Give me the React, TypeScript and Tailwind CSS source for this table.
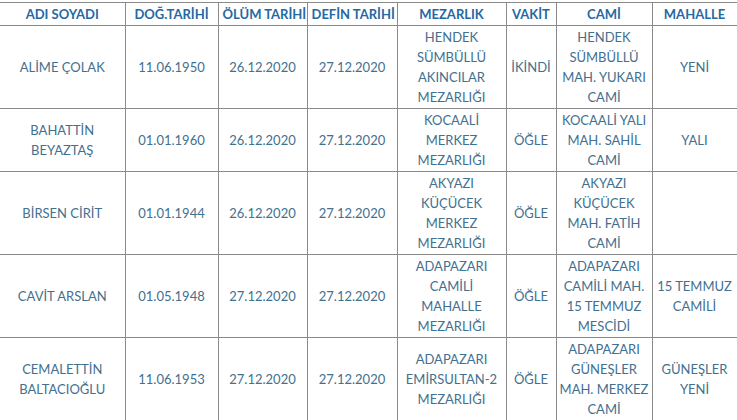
import React from "react";

type Row = {
  name: string;
  dob: string;
  death: string;
  burial: string;
  cemetery: string;
  time: string;
  mosque: string;
  district: string;
};

const rows: Row[] = [
  {
    name: "ALİME ÇOLAK",
    dob: "11.06.1950",
    death: "26.12.2020",
    burial: "27.12.2020",
    cemetery: "HENDEK SÜMBÜLLÜ AKINCILAR MEZARLIĞI",
    time: "İKİNDİ",
    mosque: "HENDEK SÜMBÜLLÜ MAH. YUKARI CAMİ",
    district: "YENİ",
  },
  {
    name: "BAHATTİN BEYAZTAŞ",
    dob: "01.01.1960",
    death: "26.12.2020",
    burial: "27.12.2020",
    cemetery: "KOCAALİ MERKEZ MEZARLIĞI",
    time: "ÖĞLE",
    mosque: "KOCAALİ YALI MAH. SAHİL CAMİ",
    district: "YALI",
  },
  {
    name: "BİRSEN CİRİT",
    dob: "01.01.1944",
    death: "26.12.2020",
    burial: "27.12.2020",
    cemetery: "AKYAZI KÜÇÜCEK MERKEZ MEZARLIĞI",
    time: "ÖĞLE",
    mosque: "AKYAZI KÜÇÜCEK MAH. FATİH CAMİ",
    district: "",
  },
  {
    name: "CAVİT ARSLAN",
    dob: "01.05.1948",
    death: "27.12.2020",
    burial: "27.12.2020",
    cemetery: "ADAPAZARI CAMİLİ MAHALLE MEZARLIĞI",
    time: "ÖĞLE",
    mosque: "ADAPAZARI CAMİLİ MAH. 15 TEMMUZ MESCİDİ",
    district: "15 TEMMUZ CAMİLİ",
  },
  {
    name: "CEMALETTİN BALTACIOĞLU",
    dob: "11.06.1953",
    death: "27.12.2020",
    burial: "27.12.2020",
    cemetery: "ADAPAZARI EMİRSULTAN-2 MEZARLIĞI",
    time: "ÖĞLE",
    mosque: "ADAPAZARI GÜNEŞLER MAH. MERKEZ CAMİ",
    district: "GÜNEŞLER YENİ",
  },
];

const headers = [
  "ADI SOYADI",
  "DOĞ.TARİHİ",
  "ÖLÜM TARİHİ",
  "DEFİN TARİHİ",
  "MEZARLIK",
  "VAKİT",
  "CAMİ",
  "MAHALLE",
];

const widths = [
  "w-[125px]",
  "w-[93px]",
  "w-[89px]",
  "w-[90px]",
  "w-[109px]",
  "w-[50px]",
  "w-[96px]",
  "w-[85px]",
];

export default function App() {
  return (
    <div className="w-[737px] h-[420px] overflow-hidden bg-white pt-[2px] font-['Lato','Liberation_Sans',sans-serif]">
      <table className="w-[737px] table-fixed border-collapse text-[13px]">
        <colgroup>
          {widths.map((w, i) => (
            <col key={i} className={w} />
          ))}
        </colgroup>
        <thead>
          <tr className="h-[23px]">
            {headers.map((h, i) => (
              <th
                key={h}
                className={
                  "border border-[#8a8a8a] px-1 text-center font-bold leading-[20px] text-[#2569a3] whitespace-nowrap " +
                  (i === 0 ? "border-l-0" : "")
                }
              >
                {h}
              </th>
            ))}
          </tr>
        </thead>
        <tbody>
          {rows.map((r) => {
            const cells = [
              r.name,
              r.dob,
              r.death,
              r.burial,
              r.cemetery,
              r.time,
              r.mosque,
              r.district,
            ];
            return (
              <tr key={r.name}>
                {cells.map((c, i) => (
                  <td
                    key={i}
                    className={
                      "border border-[#8a8a8a] px-[3px] py-[1px] text-center align-middle leading-[20px] text-[#42708f] " +
                      (i === 0 ? "border-l-0 px-[12px]" : "")
                    }
                  >
                    {c}
                  </td>
                ))}
              </tr>
            );
          })}
        </tbody>
      </table>
    </div>
  );
}
